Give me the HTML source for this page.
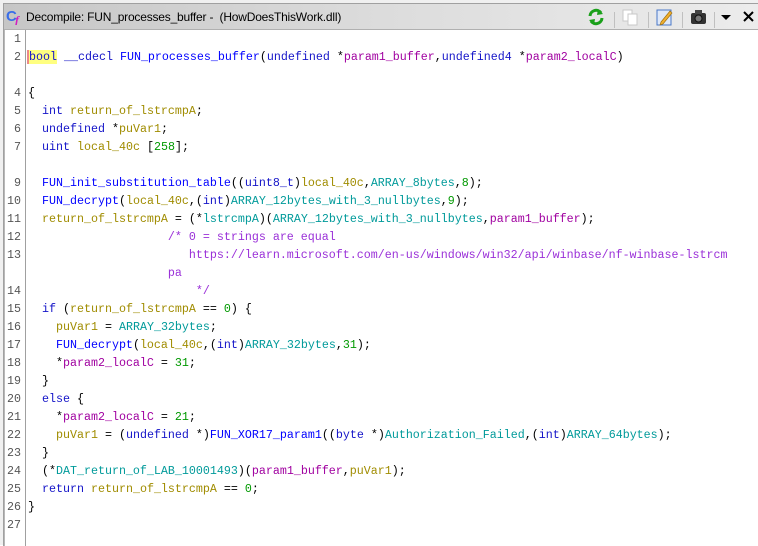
<!DOCTYPE html>
<html><head><meta charset="utf-8"><style>
body{margin:0;width:758px;height:545px;background:#fff;overflow:hidden;position:relative;font-family:"Liberation Sans",sans-serif}
#outer{position:absolute;left:0;top:0;width:758px;height:545px;background:#f0f0f0}
#win{position:absolute;left:3px;top:3px;width:755px;height:542px;background:#fff;border-left:1px solid #a0a0a0;border-top:1px solid #a0a0a0}
#title{position:absolute;left:0;top:0;right:0;height:25px;background:linear-gradient(to right,#c6c6c6,#dcdcdc 50%,#ececec);border-bottom:1px solid #b0b0b0}
#title .t{position:absolute;left:22px;top:6px;font-size:12px;color:#000;letter-spacing:-0.2px}
#gut{position:absolute;left:0;top:26px;width:20px;height:516px;border-right:1px solid #a0a0a0;border-left:1px solid #b8b8b8}
pre{margin:0;position:absolute;top:26px;font-family:"Liberation Mono",monospace;font-size:11.67px;line-height:18px}
#nums{left:0;width:17px;text-align:right;color:#555}
#code{left:24px;color:#000}
.k{color:#1414c8}.f{color:#0000ff}.v{color:#a08c00}.g{color:#009a9a}.p{color:#a000a0}.c{color:#9a30d8}.n{color:#009900}
.hl{background:#ffff80;border-left:2px solid #e88;margin-left:-1px}
.sep{position:absolute;top:8px;width:1px;height:16px;background:#c0c0c0}
</style></head><body><div id="outer"><div id="win">
<div id="title">
<svg style="position:absolute;left:2px;top:3px" width="18" height="18"><text x="0" y="14" font-family="Liberation Sans" font-weight="bold" font-size="15" fill="#3a6ee8">C</text><text x="9" y="17" font-family="Liberation Serif" font-style="italic" font-weight="bold" font-size="12" fill="#d020c0">f</text></svg>
<span class="t">Decompile: FUN_processes_buffer -&nbsp; (HowDoesThisWork.dll)</span>
<svg style="position:absolute;left:583px;top:4px" width="18" height="18"><path d="M3 8 A6 6 0 0 1 14 5" stroke="#1aa01a" stroke-width="3" fill="none"/><path d="M11 1 L16 6 L10 7Z" fill="#1aa01a"/><path d="M15 10 A6 6 0 0 1 4 13" stroke="#1aa01a" stroke-width="3" fill="none"/><path d="M7 17 L2 12 L8 11Z" fill="#1aa01a"/></svg>
<div class="sep" style="left:610px"></div>
<svg style="position:absolute;left:618px;top:5px" width="18" height="18"><rect x="1" y="1" width="9" height="11" fill="#fff" stroke="#c8c8c8"/><rect x="6" y="5" width="9" height="11" fill="#fff" stroke="#c8c8c8"/></svg>
<div class="sep" style="left:644px"></div>
<svg style="position:absolute;left:652px;top:4px" width="18" height="18"><rect x="1" y="2" width="14" height="15" fill="#dfe8f8" stroke="#4a78c8"/><path d="M5 14 L14 3 L16 5 L7 16 L4 17Z" fill="#f0b030" stroke="#a07010" stroke-width="0.7"/></svg>
<div class="sep" style="left:678px"></div>
<svg style="position:absolute;left:686px;top:4px" width="18" height="18"><rect x="1" y="5" width="15" height="11" rx="2" fill="#333"/><rect x="5" y="2" width="7" height="4" fill="#444"/><circle cx="8.5" cy="10.5" r="3.5" fill="#777" stroke="#111"/></svg>
<div class="sep" style="left:710px"></div>
<svg style="position:absolute;left:716px;top:9px" width="12" height="8"><path d="M1 2 L11 2 L6 7Z" fill="#000"/></svg>
<svg style="position:absolute;left:739px;top:7px" width="11" height="11"><path d="M1 1 L10 10 M10 1 L1 10" stroke="#000" stroke-width="2"/></svg>
</div>
<div id="gut"></div>
<pre id="nums">1
2

4
5
6
7

9
10
11
12
13

14
15
16
17
18
19
20
21
22
23
24
25
26
27</pre>
<pre id="code"> 
<span class="hl"><span class="k">bool</span></span> <span class="k">__cdecl</span> <span class="f">FUN_processes_buffer</span>(<span class="k">undefined</span> *<span class="p">param1_buffer</span>,<span class="k">undefined4</span> *<span class="p">param2_localC</span>)

{
  <span class="k">int</span> <span class="v">return_of_lstrcmpA</span>;
  <span class="k">undefined</span> *<span class="v">puVar1</span>;
  <span class="k">uint</span> <span class="v">local_40c</span> [<span class="n">258</span>];

  <span class="f">FUN_init_substitution_table</span>((<span class="k">uint8_t</span>)<span class="v">local_40c</span>,<span class="g">ARRAY_8bytes</span>,<span class="n">8</span>);
  <span class="f">FUN_decrypt</span>(<span class="v">local_40c</span>,(<span class="k">int</span>)<span class="g">ARRAY_12bytes_with_3_nullbytes</span>,<span class="n">9</span>);
  <span class="v">return_of_lstrcmpA</span> = (*<span class="g">lstrcmpA</span>)(<span class="g">ARRAY_12bytes_with_3_nullbytes</span>,<span class="p">param1_buffer</span>);
<span class="c">                    /* 0 = strings are equal
                       https://learn.microsoft.com/en-us/windows/win32/api/winbase/nf-winbase-lstrcm
                    pa
                        */</span>
  <span class="k">if</span> (<span class="v">return_of_lstrcmpA</span> == <span class="n">0</span>) {
    <span class="v">puVar1</span> = <span class="g">ARRAY_32bytes</span>;
    <span class="f">FUN_decrypt</span>(<span class="v">local_40c</span>,(<span class="k">int</span>)<span class="g">ARRAY_32bytes</span>,<span class="n">31</span>);
    *<span class="p">param2_localC</span> = <span class="n">31</span>;
  }
  <span class="k">else</span> {
    *<span class="p">param2_localC</span> = <span class="n">21</span>;
    <span class="v">puVar1</span> = (<span class="k">undefined</span> *)<span class="f">FUN_XOR17_param1</span>((<span class="k">byte</span> *)<span class="g">Authorization_Failed</span>,(<span class="k">int</span>)<span class="g">ARRAY_64bytes</span>);
  }
  (*<span class="g">DAT_return_of_LAB_10001493</span>)(<span class="p">param1_buffer</span>,<span class="v">puVar1</span>);
  <span class="k">return</span> <span class="v">return_of_lstrcmpA</span> == <span class="n">0</span>;
}
</pre>
</div></div></body></html>
